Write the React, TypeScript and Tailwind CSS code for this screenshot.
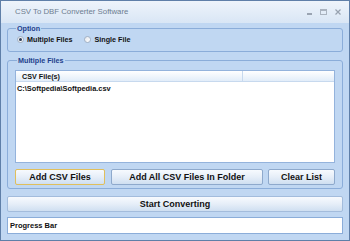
import React from "react";

const font = { fontFamily: '"Liberation Sans", Arial, sans-serif' };

function Radio({ checked }: { checked: boolean }) {
  return (
    <span className="relative inline-flex h-[7px] w-[7px] items-center justify-center rounded-full border border-[#a3b1c3] bg-gradient-to-br from-[#e4e8ee] to-[#ffffff]">
      {checked && <span className="h-[3px] w-[3px] rounded-full bg-[#2b3a55]" />}
    </span>
  );
}

function Btn({ children, className = "" }: { children: React.ReactNode; className?: string }) {
  return (
    <button
      className={
        "flex h-[16px] items-center justify-center rounded-[2px] border bg-gradient-to-b from-[#f7fafe] via-[#e6eef8] to-[#cfdff1] text-[9px] font-bold leading-none text-[#111] " +
        className
      }
    >
      {children}
    </button>
  );
}

export default function App() {
  return (
    <div style={font} className="flex h-[241px] w-[350px] flex-col overflow-hidden border border-[#5f7fa8] bg-[#c0d7f2]">
      {/* Title bar */}
      <div className="flex h-[22px] shrink-0 items-center justify-between bg-gradient-to-b from-[#eef4fb] to-[#d9e6f5] pl-[14px] pr-[6px]">
        <span className="text-[7.8px] leading-none text-[#6d7d90]">CSV To DBF Converter Software</span>
        <div className="flex items-center gap-[8px]">
          <span className="mt-[4px] block h-[2px] w-[5px] bg-[#9aa4b2]" />
          <span className="block h-[6px] w-[7px] border border-t-2 border-[#aab3bf]" />
          <svg width="6" height="6" viewBox="0 0 6 6" className="mr-[2px]">
            <path d="M0.5 0.5 L5.5 5.5 M5.5 0.5 L0.5 5.5" stroke="#98a2b0" strokeWidth="1.2" />
          </svg>
        </div>
      </div>

      {/* Body */}
      <div className="flex flex-1 flex-col px-[6px] pt-[1px]">
        {/* Option group */}
        <fieldset className="h-[28px] rounded-[3px] border border-[#8badd9] px-[6px]">
          <legend className="ml-[2px] px-[1px] text-[7.2px] font-bold leading-[9px] text-[#1d3f8c]">Option</legend>
          <div className="mt-[3px] flex items-center text-[7.2px] font-bold leading-none text-[#111]">
            <span className="ml-[3px] flex items-center gap-[3px]">
              <Radio checked />
              Multiple Files
            </span>
            <span className="ml-[11px] flex items-center gap-[4px]">
              <Radio checked={false} />
              Single File
            </span>
          </div>
        </fieldset>

        {/* Multiple Files group */}
        <fieldset className="mt-[4px] h-[133px] rounded-[3px] border border-[#8badd9] px-[7px]">
          <legend className="ml-[2px] px-[1px] text-[7.2px] font-bold leading-[9px] text-[#1d3f8c]">Multiple Files</legend>
          <div className="mt-[5px] flex h-[93px] flex-col border border-[#94b3dc] bg-white">
            <div className="flex h-[11px] border-b border-[#c7d9ee] bg-gradient-to-b from-[#ffffff] to-[#e2edf9] text-[7.2px] font-bold leading-[11px] text-[#111]">
              <div className="w-[227px] border-r border-[#c7d9ee] pl-[6px]">CSV File(s)</div>
              <div className="flex-1" />
            </div>
            <div className="pl-[1px] pt-[3px] text-[7.4px] font-bold leading-none text-[#111]">
              C:\Softpedia\Softpedia.csv
            </div>
          </div>
          <div className="mt-[6px] flex">
            <Btn className="w-[90px] border-[#e0bf5c]">Add CSV Files</Btn>
            <Btn className="ml-[6px] w-[152px] border-[#8ea9cc]">Add All CSV Files In Folder</Btn>
            <Btn className="ml-[5px] w-[67px] border-[#8ea9cc]">Clear List</Btn>
          </div>
        </fieldset>

        <Btn className="mt-[7px] w-full border-[#a3bcdc]">Start Converting</Btn>

        <div className="mt-[5px] flex h-[17px] items-center border border-[#8badd9] bg-white pl-[2px] text-[7.5px] font-bold leading-none text-[#111]">
          Progress Bar
        </div>
      </div>
    </div>
  );
}
